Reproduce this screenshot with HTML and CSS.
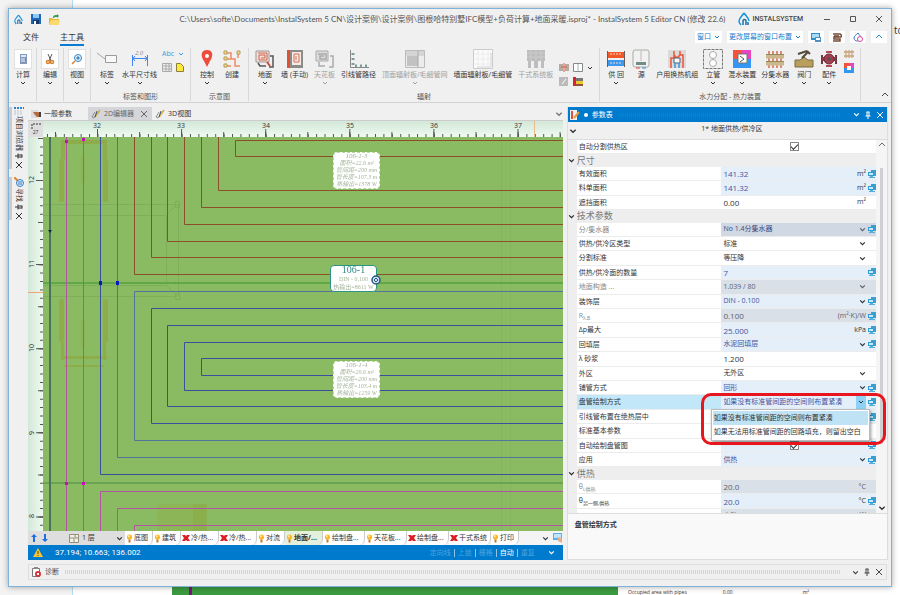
FILE: index.html
```
<!doctype html>
<html>

<head>
    <meta charset="utf-8">
    <title>InstalSystem 5 Editor CN</title>
    <link rel="stylesheet" href="styles.css">
</head>

<body>
    <!-- Shared icons -->
    <svg class="defs" aria-hidden="true">
        <symbol id="chev" viewBox="0 0 6 6"><path d="M1 2l2 2 2-2" fill="none" stroke="currentColor" /></symbol>
        <symbol id="pc" viewBox="0 0 8 8"><path d="M3 0h5v6H5V5H3z" fill="#3c9fd0" /><path d="M0 2h6v4H0z" fill="#2e9bd6" /><path d="M1 3h4v2H1z" fill="#c9ecfb" /><path d="M2 6h3v1h2v1H1V7h1z" fill="#58aed8" /></symbol>
        <symbol id="bulb" viewBox="0 0 7 9"><circle cx="3.500" cy="3" r="2.600" fill="#fbb829" /><circle cx="2.800" cy="2.300" r="1" fill="#fff0a8" /><path d="M2.500 5.500h2v3h-2z" fill="#b77b35" /></symbol>
        <symbol id="cross" viewBox="0 0 8 8"><path d="M0 1h3l1 1 1-1h3L6 4l2 3H5L4 6 3 7H0l2-3z" fill="#dc1f26" /></symbol>
        <symbol id="close" viewBox="0 0 8 8"><path d="M1 1l6 6M7 1L1 7" fill="none" stroke="currentColor" /></symbol>
        <symbol id="pin" viewBox="0 0 8 8"><path d="M2.500 1h3M3 1v4M5 1v4M1.500 5h5M4 5v3" fill="none" stroke="currentColor" /></symbol>
        <symbol id="pen" viewBox="0 0 10 10"><path d="M1 8l3-5M3 9l3-4M1 8l2 1" stroke="#8b8f96" fill="none" /><path d="M4 8L9 1" stroke="#d9a93c" stroke-width="1.500" /><path d="M6 2l-2 6" stroke="#38567c" /></symbol>
        <symbol id="drop" viewBox="0 0 12 14"><path d="M6 1C4 4 1 6 1 9c0 2 1 3 2 4M6 1c2 3 5 5 5 8" fill="none" stroke="#1492dc" stroke-width="1.500" /><path d="M5 13V9c0-2 3-2 3 0v4M10 10v3" fill="none" stroke="#1a6fae" stroke-width="1.500" /></symbol>
    </svg>

    <div class="backdrop">
        <div class="backdrop-text">to</div>
        <div class="backdrop-bottom">
            <div class="backdrop-plan"></div>
            <div class="backdrop-row"><span>Occupied area with pipes</span><span>0.00</span><span>m²</span></div>
        </div>
    </div>

    <div class="window">
        <header class="titlebar">
            <div class="quick">
                <svg width="9" height="11"><use href="#drop" /></svg>
                <svg width="10" height="10" viewBox="0 0 10 10"><path d="M0 0h10v10H0z" fill="#1e66b8" /><path d="M2 0h6v4H2z" fill="#8ec9f2" /><path d="M2 6h6v4H2z" fill="#173a66" /><path d="M3 7h2v3H3z" fill="#fff" /></svg>
                <svg width="11" height="11" viewBox="0 0 11 11"><path d="M0 4h3l1 1h6v6H0z" fill="#e5b93b" /><path d="M2 6h9l-1 5H0z" fill="#f8da6e" /><path d="M4 4c0-3 2-3 4-3V0l2 2-2 2V3C6 3 5 3 5 4z" fill="#2fa24a" /></svg>
            </div>
            <div class="title">C:\Users\softe\Documents\InstalSystem 5 CN\设计案例\设计案例\图根哈特别墅IFC模型+负荷计算+地面采暖.isproj* - InstalSystem 5 Editor CN (修改 22.6)</div>
            <div class="winbar">
                <div class="brand"><svg width="12" height="14"><use href="#drop" /></svg>INSTALSYSTEM</div>
                <button aria-label="最小化"><svg width="8" height="8" viewBox="0 0 8 8"><path d="M1 4.500h6" stroke="#555" /></svg></button>
                <button aria-label="最大化"><svg width="8" height="8" viewBox="0 0 8 8"><path d="M1.500 1.500h5v5h-5z" fill="none" stroke="#555" /></svg></button>
                <button aria-label="关闭"><svg width="8" height="8"><use href="#close" /></svg></button>
            </div>
        </header>

        <nav class="menu">
            <button class="menu-tab">文件</button>
            <button class="menu-tab current">主工具</button>
            <div class="menu-right">
                <button class="chip">窗口 <svg width="6" height="6"><use href="#chev" /></svg></button>
                <button class="chip">更改屏幕的窗口布置 <svg width="6" height="6"><use href="#chev" /></svg></button>
                <button class="chip" aria-label="屏幕"><svg width="10" height="10" viewBox="0 0 10 10"><path d="M0 1h9v7H0z" fill="#2e8fd0" /><path d="M1 2h7v4H1z" fill="#a8dcf7" /><path d="M4 5h6v5H4z" fill="#5390c0" /><path d="M5 6h4v2H5z" fill="#fff" /></svg></button>
                <button class="chip" aria-label="材料"><svg width="10" height="10" viewBox="0 0 10 10"><path d="M1 2h7c2 1 2 3 0 3H2v2h6v2H1M2 4h5" fill="none" stroke="#754c35" stroke-width="1.500" /></svg></button>
                <button class="chip" aria-label="水热"><svg width="10" height="10" viewBox="0 0 10 10"><path d="M5 1C3 3 1 4 1 6c0 4 7 4 7 0C8 4 6 3 5 1z" fill="none" stroke="#3275c8" /><circle cx="7" cy="7" r="2.500" fill="#fff" stroke="#e044a0" /></svg></button>
                <button class="chip" aria-label="折叠"><svg width="8" height="8" viewBox="0 0 8 8"><path d="M1 5l3-3 3 3" fill="none" stroke="#258bd2" /></svg></button>
            </div>
        </nav>

        <div class="ribbon">
            <section class="group single">
                <button class="tool boxed"><span class="box"><svg width="12" height="12" viewBox="0 0 12 12"><path d="M3 1h7v10H3z" fill="#8698b9" /><path d="M4 2h5v2H4z" fill="#dfe9f7" /><path d="M4 6h4M4 8h4" stroke="#eef" /><path d="M8 6h1v1H8z" fill="#b43c56" /></svg></span>计算<svg width="6" height="6"><use href="#chev" /></svg></button>
            </section>
            <section class="group single">
                <button class="tool boxed"><span class="box"><svg width="12" height="12" viewBox="0 0 12 12"><path d="M4 1l3 7M8 1L5 8" stroke="#565b64" fill="none" /><circle cx="4" cy="9" r="1.500" fill="none" stroke="#d9822b" stroke-width="1.500" /><circle cx="8" cy="9" r="1.500" fill="none" stroke="#d9822b" stroke-width="1.500" /></svg></span>编辑<svg width="6" height="6"><use href="#chev" /></svg></button>
            </section>
            <section class="group single">
                <button class="tool boxed"><span class="box"><svg width="12" height="12" viewBox="0 0 12 12"><circle cx="7" cy="5" r="3.500" fill="#e2f2fd" stroke="#3e84c6" /><path d="M5 5l2-2 2 2-2 2z" fill="#3e84c6" /><path d="M4 8l-3 3" stroke="#d9822b" stroke-width="1.500" /></svg></span>视图<svg width="6" height="6"><use href="#chev" /></svg></button>
            </section>

            <section class="group">
                <div class="tools">
                    <button class="tool"><svg width="20" height="20" viewBox="0 0 20 20"><path d="M0 4l8 6" stroke="#a5a5a5" /><path d="M8.500 6.500h11v7h-11z" fill="#f8f8f8" stroke="#9a9a9a" /></svg>标签<svg width="6" height="6"><use href="#chev" /></svg></button>
                    <button class="tool"><svg width="20" height="20" viewBox="0 0 20 20"><text x="5" y="6" class="dim-text">2.0</text><path d="M2.500 6v11M17.500 6v11M3 9.500h14M5 7L3 9.500 5 12M15 7l2 2.500-2 2.500" fill="none" stroke="#3d83f2" /></svg>水平尺寸线<svg width="6" height="6"><use href="#chev" /></svg></button>
                    <div class="minis">
                        <button class="abc">Abc <svg width="6" height="6"><use href="#chev" /></svg></button>
                        <div>
                            <button aria-label="表格"><svg width="10" height="9" viewBox="0 0 10 9"><path d="M.5.5h9v8h-9zM1 3h8M1 6h8M4 1v7M7 1v7" fill="#eee" stroke="#aaa" /></svg></button>
                            <button aria-label="便签"><svg width="8" height="9" viewBox="0 0 8 9"><path d="M.5.5h4l3 3v5h-7z" fill="#ffe83d" stroke="#89813a" /></svg></button>
                        </div>
                    </div>
                </div>
                <div class="caption">标签和图形</div>
            </section>

            <section class="group">
                <div class="tools">
                    <button class="tool"><svg width="20" height="20" viewBox="0 0 20 20"><path d="M10 1c-7 0-6 7-3 11l3 6 3-6c3-4 4-11-3-11z" fill="#ef4b3c" /><circle cx="10" cy="7" r="2" fill="#fff" /></svg>控制<svg width="6" height="6"><use href="#chev" /></svg></button>
                    <button class="tool"><svg width="20" height="20" viewBox="0 0 20 20"><path d="M5 4h4v6h4v7h5M5 10h4M5 17h4M16 4v5" fill="none" stroke="#ee8b61" stroke-width="1.500" /><path d="M2 2h3v3H2zM2 8h3v3H2zM2 15h3v3H2zM15 2h3v3h-3z" fill="#f3e0a0" stroke="#b39b50" /></svg>创建</button>
                </div>
                <div class="caption">示意图</div>
            </section>

            <section class="group">
                <div class="tools roomy">
                    <button class="tool"><svg width="20" height="20" viewBox="0 0 20 20"><path d="M1 2h13v11H1z" fill="#f9ded5" stroke="#999" /><path d="M3 4h9v7H4V6h6v3H6" fill="none" stroke="#c76755" /><path d="M3 14l2 3h6M15 7h3v11h-4" fill="none" stroke="#555" stroke-width="1.500" /><path d="M12 13l3 4" stroke="#d14832" stroke-width="2" /></svg>地面<svg width="6" height="6"><use href="#chev" /></svg></button>
                    <button class="tool"><svg width="20" height="20" viewBox="0 0 20 20"><path d="M2 1h16v18H2z" fill="#8b8b88" /><path d="M2 1h3v18H2z" fill="#e25032" /><path d="M7 3h9v13H7z" fill="#f4ebe7" /><path d="M9 5h5v8H9zM11 7v4" fill="none" stroke="#db6b58" /></svg>墙 (手动)</button>
                    <button class="tool off"><svg width="20" height="20" viewBox="0 0 20 20"><path d="M1 2h12v10H1z" fill="#ddd" stroke="#aaa" /><path d="M3 5h8v5H5V7h4M15 7h3v11h-4M4 13v4h6" fill="none" stroke="#aaa" stroke-width="1.500" /></svg>天花板<svg width="6" height="6"><use href="#chev" /></svg></button>
                    <button class="tool"><svg width="20" height="20" viewBox="0 0 20 20"><path d="M1.500 1v17.500H20" fill="none" stroke="#888" /><path d="M4 4v13h14" fill="none" stroke="#7f9a9b" stroke-width="3" stroke-dasharray="2 3" /></svg>引线管路径</button>
                    <button class="tool off"><svg width="20" height="20" viewBox="0 0 20 20"><path d="M.5 1.500h19v17H.5z" fill="#ececec" stroke="#bbb" /><path d="M1 2h18v5H1z" fill="#d5d5d5" /><path d="M2 7h11v10H2z" fill="#c2c2c2" /><path d="M13 2v16" stroke="#aaa" /></svg>顶面辐射板/毛细管网<svg width="6" height="6"><use href="#chev" /></svg></button>
                    <button class="tool"><svg width="20" height="20" viewBox="0 0 20 20"><path d="M.5.5h19v19H.5z" fill="#fafafa" stroke="#ccc" /><path d="M5 1v18M10 1v18M15 1v18M1 5h18M1 10h18M1 15h18" stroke="#ececec" /><path d="M18 4v14H4" fill="none" stroke="#d6d6d6" /></svg>墙面辐射板/毛细管</button>
                    <button class="tool off"><svg width="20" height="20" viewBox="0 0 20 20"><path d="M1 1h18v11H1zM2 12h3v7H2zM8 12h4v7H8zM15 12h3v7h-3z" fill="#bdbdbd" /><path d="M1 4h18M1 8h18M5 1v11M10 1v11M15 1v11" stroke="#ccc" /></svg>干式系统板</button>
                    <div class="minis low">
                        <div>
                            <button aria-label="镜像"><svg width="10" height="9" viewBox="0 0 10 9"><path d="M0 1h4v7H0zM6 1h4v7H6z" fill="#b7aaa3" /><path d="M5 0v9M2 4h6" stroke="#e05c43" /></svg></button>
                            <button aria-label="分割"><svg width="10" height="9" viewBox="0 0 10 9"><path d="M.5.5h9v8h-9z" fill="#fff" stroke="#888" /><path d="M5 1v7" stroke="#9bb" /></svg></button>
                            <svg width="6" height="6"><use href="#chev" /></svg>
                        </div>
                        <div>
                            <button aria-label="修改"><svg width="10" height="9" viewBox="0 0 10 9"><path d="M0 0h9v9H0z" fill="#bbb" /><path d="M3 7l4-5" stroke="#fff" /></svg></button>
                            <button aria-label="图层"><svg width="10" height="9" viewBox="0 0 10 9"><path d="M2 1h8v3H2z" fill="#777" /><path d="M2 4h8v3H2z" fill="#ecc934" /><path d="M2 7h8v2H2z" fill="#8d5535" /><path d="M0 0h3v9H0z" fill="#d5242d" /></svg></button>
                        </div>
                    </div>
                </div>
                <div class="caption">辐射</div>
            </section>

            <section class="group">
                <div class="tools">
                    <button class="tool"><svg width="20" height="20" viewBox="0 0 20 20"><path d="M1 3h18v6H1z" fill="#f05626" /><path d="M1 11h18v6H1z" fill="#3d98f0" /><path d="M1.500 2v8M18.500 2v8M1.500 10v8M18.500 10v8" stroke="#675e5a" /><path d="M4 5h11M4 14h11" stroke="#fbd9cc" stroke-dasharray="2 1" /></svg>供 回<svg width="6" height="6"><use href="#chev" /></svg></button>
                    <button class="tool"><svg width="20" height="20" viewBox="0 0 20 20"><rect x="2" y="1" width="16" height="17" rx="2" fill="#f1f1ef" stroke="#aaa" /><path d="M10 2v10" stroke="#bbb" /><path d="M5 13h10v3H5z" fill="#718b89" /><path d="M5 19h4" stroke="#d44" /><path d="M11 19h4" stroke="#38c" /></svg>源</button>
                    <button class="tool"><svg width="20" height="20" viewBox="0 0 20 20"><path d="M1 1h18v18H1z" fill="#dadada" /><path d="M4 19V9h3V2M16 19V6h-3V2M7 6l3 3 3-3" fill="none" stroke="#ef5335" stroke-width="1.500" /><path d="M7 9h6v5H7z" fill="#fff" stroke="#495c70" /><path d="M8 14v5M12 14v5" stroke="#3996dc" stroke-width="1.500" /></svg>户用换热机组</button>
                    <button class="tool"><svg width="20" height="20" viewBox="0 0 20 20"><path d="M.5.500h19v19H.5z" fill="none" stroke="#777" stroke-dasharray="3 1" /><circle cx="10" cy="6" r="3.500" fill="#fff" stroke="#aaa" /><circle cx="10" cy="14" r="3.500" fill="#fff" stroke="#aaa" /></svg>立管<svg width="6" height="6"><use href="#chev" /></svg></button>
                    <button class="tool"><svg width="20" height="20" viewBox="0 0 20 20"><path d="M1 1h9v9H1z" fill="#f3523b" /><path d="M10 1h9v9h-9z" fill="#e846c0" /><path d="M1 10h18v9H1z" fill="#3296f2" /><path d="M6 5h9v9H6z" fill="#fff" stroke="#767676" /><path d="M8 7l4 3-4 3" fill="none" stroke="#555" /></svg>混水装置<svg width="6" height="6"><use href="#chev" /></svg></button>
                    <button class="tool"><svg width="20" height="20" viewBox="0 0 20 20"><path d="M4 2v17M8 2v17M12 2v17M16 2v17" stroke="#dc8b7a" stroke-width="2" /><path d="M1 7.500h18M1 14.500h18" stroke="#cbb98b" stroke-width="4" /><path d="M1 5.500h18M1 12.500h18" stroke="#968759" /></svg>分集水器<svg width="6" height="6"><use href="#chev" /></svg></button>
                    <button class="tool"><svg width="20" height="20" viewBox="0 0 20 20"><path d="M1 11h5l4-3 4 3h5v7H1z" fill="#b99f5e" stroke="#7d6b3e" /><path d="M8 9l6-6M4 5l9-3M13 2l3 3" stroke="#554b3a" stroke-width="2" /></svg>阀门<svg width="6" height="6"><use href="#chev" /></svg></button>
                    <button class="tool"><svg width="20" height="20" viewBox="0 0 20 20"><path d="M3 6v9M17 6v9" stroke="#6b3a44" stroke-width="2" /><path d="M3 10h14" stroke="#8d3b48" stroke-width="4" /><circle cx="10" cy="10" r="5" fill="#a83f4d" stroke="#662b37" /><circle cx="10" cy="10" r="2" fill="#5b4f56" /><path d="M7 3h6M7 17h6" stroke="#b54756" stroke-width="2" /></svg>配件<svg width="6" height="6"><use href="#chev" /></svg></button>
                    <div class="minis stack">
                        <button aria-label="集水器"><svg width="10" height="10" viewBox="0 0 10 10"><path d="M2 1v8M5 1v8M8 1v8" stroke="#db7a6a" /><path d="M0 3h10M0 7h10" stroke="#c4b384" stroke-width="2" /></svg></button>
                        <button aria-label="混水"><svg width="10" height="10" viewBox="0 0 10 10"><path d="M0 0h5v5H0z" fill="#f3523b" /><path d="M5 0h5v5H5z" fill="#e846c0" /><path d="M0 5h10v5H0z" fill="#3296f2" /><path d="M3 3h4v4H3z" fill="#fff" /></svg></button>
                    </div>
                </div>
                <div class="caption">水力分配 - 热力装置</div>
            </section>
            <button class="ribbon-fold" aria-label="折叠功能区"><svg width="8" height="8" viewBox="0 0 8 8"><path d="M1 5l3-3 3 3" fill="none" stroke="#444" /></svg></button>
        </div>

        <div class="work">
            <aside class="dock">
                <button class="dock-tab"><svg width="10" height="8" viewBox="0 0 10 8"><path d="M0 1h10" stroke="#2f7fd6" stroke-width="2" stroke-dasharray="2 1" /><path d="M1 3v5M4 3v5M7 3v5" stroke="#b5c2d0" /></svg>项目浏览器<svg class="turned" width="8" height="8"><use href="#pin" /></svg><svg width="8" height="8"><use href="#close" /></svg></button>
                <button class="dock-tab"><svg width="10" height="10" viewBox="0 0 10 10"><path d="M0 0l4 4" stroke="#e2872c" stroke-width="2" /><circle cx="6" cy="6" r="3.500" fill="#d9ecfb" stroke="#3a7fc2" /><path d="M5 4v4M7 4v4" stroke="#3a7fc2" /></svg>寻找<svg class="turned" width="8" height="8"><use href="#pin" /></svg><svg width="8" height="8"><use href="#close" /></svg></button>
            </aside>

            <main class="editor">
                <div class="tabs">
                    <button class="tab"><svg width="10" height="10" viewBox="0 0 10 10"><path d="M0 1h7v8H0z" fill="#dcdcdc" /><path d="M2 3h5l3 1v4H6L4 6z" fill="#b56a3c" /><path d="M8 3h2v5H8z" fill="#3a3f49" /></svg>一般参数</button>
                    <button class="tab current"><svg width="10" height="10"><use href="#pen" /></svg>2D编辑器<svg class="tab-close" width="8" height="8"><use href="#close" /></svg></button>
                    <button class="tab"><svg width="10" height="10"><use href="#pen" /></svg>3D视图</button>
                    <button class="tabs-more" aria-label="更多标签"><svg width="8" height="8"><use href="#chev" /></svg></button>
                </div>

                <div class="sheet">
                    <div class="corner"><svg width="10" height="6" viewBox="0 0 10 6"><path d="M1 6V1h9" fill="none" stroke="#333" stroke-dasharray="2 1" /></svg>27</div>
                    <svg class="ruler-top" width="100%" height="16">
                        <path d="M4 14.500h3000" stroke="#555" stroke-width="3" stroke-dasharray="1 7.410" />
                        <path d="M12 13.500h3000" stroke="#555" stroke-width="5" stroke-dasharray="1 41.050" />
                        <path d="M54 12h3000" stroke="#555" stroke-width="8" stroke-dasharray="1 83.100" />
                        <g class="scale">
                            <text x="54" y="7">32</text>
                            <text x="138" y="7">33</text>
                            <text x="223" y="7">34</text>
                            <text x="307" y="7">35</text>
                            <text x="391" y="7">36</text>
                            <text x="475" y="7">37</text>
                        </g>
                        <path d="M491.500 0v16" stroke="#efb98c" />
                    </svg>
                    <svg class="ruler-left" width="15" height="100%">
                        <path d="M13.500 1v2000" stroke="#555" stroke-width="3" stroke-dasharray="1 7.410" />
                        <path d="M12.500 1v2000" stroke="#555" stroke-width="5" stroke-dasharray="1 41.050" />
                        <path d="M11.500 43v2000" stroke="#555" stroke-width="7" stroke-dasharray="1 83.100" />
                        <g class="scale">
                            <text transform="translate(6 43) rotate(-90)">12</text>
                            <text transform="translate(6 127) rotate(-90)">11</text>
                            <text transform="translate(6 211) rotate(-90)">10</text>
                            <text transform="translate(6 296) rotate(-90)">9</text>
                            <text transform="translate(6 379) rotate(-90)">8</text>
                        </g>
                        <path d="M0 155.500h15" stroke="#efa56c" />
                    </svg>
                    <div class="canvas">
                        <svg class="drawing" width="100%" height="100%">
                            <!-- furniture underlay -->
                            <g class="furniture">
                                <rect x="16" y="22" width="5" height="43" rx="2" />
                                <rect x="60" y="22" width="5" height="43" rx="2" />
                                <path d="M18 3h46v4H18zM18 7h4v15h-4zM60 7h4v15h-4z" />
                                <rect x="16" y="162" width="5" height="43" rx="2" />
                                <rect x="60" y="162" width="5" height="43" rx="2" />
                                <path d="M18 219h46v3H18zM18 205h3v18h-3zM60 205h3v18h-3zM21 228h40v2H21z" />
                                <path d="M38 18h4v28h-4zM38 183h4v28h-4z" opacity=".5" />
                                <path d="M114 367h49v28h-49z" opacity=".4" />
                                <path d="M150 367h14v28h-14z" opacity=".7" />
                            </g>
                            <path d="M0 67.500h134M0 78.500h123M0 148.500h123M0 159.500h134M123.500 79v69M135.500 67v92M123 78l11-11M123 148l11 11" class="wall" />
                            <path d="M132.500 64.500h4v6h-4zM132.500 156.500h4v6h-4z" class="wall" />
                            <path d="M178.500 0v395M187.500 0v395" class="wall faint" transform="translate(280)" />
                            <path d="M0 146h3000" stroke="#5fa747" stroke-width="2" />
                            <path d="M0 346h3000" stroke="#6aa351" stroke-width="2" />
                            <g class="supply">
                                <path d="M91.500 0v137.500H3000" />
                                <path d="M108.500 0v120.500H3000" />
                                <path d="M124.500 0v104.500H3000" />
                                <path d="M141.500 0v87.500H3000" />
                                <path d="M158.500 0v70.500H3000" />
                                <path d="M175.500 0v53.500H3000" />
                                <path d="M3000 3.500H192.500v16H3000" />
                            </g>
                            <g class="return">
                                <path d="M57.500 0v337.500H3000" />
                                <path d="M74.500 0v320.500H3000" class="light" />
                                <path d="M3000 154.500H91.500v149H3000" class="light" />
                                <path d="M3000 171.500H108.500v115H3000" />
                                <path d="M3000 188.500H124.500v81H3000" />
                                <path d="M3000 205.500H141.500v48H3000" />
                                <path d="M3000 221.500H158.500v17H3000" />
                            </g>
                            <path d="M7 0v395" stroke="#48745f" stroke-width="2" />
                            <path d="M5 93h4l-2 3z" fill="#14284f" />
                            <g class="mains">
                                <path d="M23.500 0v395M40.500 0v395M3000 354.500H57.500V396M3000 371.500H74.500V396M3000 388.500H91.500V396" />
                            </g>
                            <path d="M22 3h3v3h-3zM39 1h3v3h-3zM22 345h3v3h-3zM39 345h3v3h-3z" fill="#c410b4" />
                            <path d="M56 144h3v4h-3zM73 144h3v4h-3z" fill="#0b16c4" />
                        </svg>
                        <div class="tag zone-a"><b>106-1-3</b><br>面积=22.6 m²<br>管间距=200 mm<br>管长度=107.3 m<br>热输出=1378 W</div>
                        <div class="tag room"><b>106-1</b><br>DIN - 0.100<br>热输出=8611 W
                            <svg class="room-mark" width="10" height="10" viewBox="0 0 10 10"><circle cx="5" cy="5" r="4" fill="#cfe2f2" stroke="#27567f" stroke-width="1.500" /><path d="M3 5l2-2 2 2-2 2z" fill="none" stroke="#27567f" /></svg>
                        </div>
                        <div class="tag zone-b"><b>106-1-4</b><br>面积=20.6 m²<br>管间距=200 mm<br>管长度=103.4 m<br>热输出=1259 W</div>
                    </div>
                </div>

                <div class="layers">
                    <button class="arrow" aria-label="上一层"><svg width="6" height="8" viewBox="0 0 6 8"><path d="M3 0l3 3H4v5H2V3H0z" fill="#1f6fe0" /></svg></button>
                    <button class="arrow" aria-label="下一层"><svg width="6" height="8" viewBox="0 0 6 8"><path d="M3 8l3-3H4V0H2v5H0z" fill="#1f6fe0" /></svg></button>
                    <div class="storey">
                        <svg width="10" height="9" viewBox="0 0 10 9"><path d="M.5.500h9v8h-9zM1 4h4v4M6 1v3h3" fill="#f5f0e6" stroke="#958e7d" /></svg>
                        <select aria-label="楼层"><option>1 层</option></select>
                        <svg width="7" height="7"><use href="#chev" /></svg>
                    </div>
                    <button class="layer"><svg width="7" height="9"><use href="#bulb" /></svg>底图</button>
                    <button class="layer"><svg width="7" height="9"><use href="#bulb" /></svg>建筑</button>
                    <button class="layer mid"><svg width="8" height="8"><use href="#cross" /></svg>冷/热...</button>
                    <button class="layer mid"><svg width="8" height="8"><use href="#cross" /></svg>冷/热...</button>
                    <button class="layer"><svg width="7" height="9"><use href="#bulb" /></svg>对流</button>
                    <button class="layer mid active"><svg width="7" height="9"><use href="#bulb" /></svg>地面/...</button>
                    <button class="layer wide"><svg width="7" height="9"><use href="#bulb" /></svg>绘制盘...</button>
                    <button class="layer wide"><svg width="7" height="9"><use href="#bulb" /></svg>天花板...</button>
                    <button class="layer wide"><svg width="8" height="8"><use href="#cross" /></svg>绘制盘...</button>
                    <button class="layer wide"><svg width="8" height="8"><use href="#cross" /></svg>干式系统</button>
                    <button class="layer"><svg width="7" height="9"><use href="#bulb" /></svg>打印</button>
                    <div class="layers-end">
                        <svg width="7" height="7"><use href="#chev" /></svg>
                        <svg width="10" height="10" viewBox="0 0 10 10"><path d="M0 0h9v7H0z" fill="#58aee3" /><path d="M1 1h7v4H1z" fill="#bfe6fb" /><path d="M4 4l5 1v5L5 8z" fill="#e2b08e" /></svg>
                    </div>
                </div>

                <div class="status">
                    <svg width="10" height="9" viewBox="0 0 10 9"><path d="M5 0l5 9H0z" fill="#f8c53a" /><path d="M5 3v3M5 7v1" stroke="#5a4410" /></svg>
                    <span class="coords">37.194; 10.663; 136.002</span>
                    <div class="modes">
                        <button>定向线</button><button>上锁</button><button>栅格</button><button class="on">自动</button><button>重复</button>
                    </div>
                    <svg width="7" height="7"><use href="#chev" /></svg>
                </div>
            </main>

            <aside class="panel">
                <header class="panel-head">
                    <svg width="10" height="10" viewBox="0 0 10 10"><path d="M0 0h7v10H0z" fill="#f4f1ee" /><path d="M1 1h2v8H1z" fill="#d8534b" /><path d="M4 8l5-6" stroke="#e99c3a" stroke-width="2" /></svg>
                    <span class="dot"></span>
                    <h2>参数表</h2>
                    <span class="grip"></span>
                    <button aria-label="菜单"><svg width="7" height="7"><use href="#chev" /></svg></button>
                    <button aria-label="固定"><svg width="8" height="8"><use href="#pin" /></svg></button>
                    <button aria-label="关闭"><svg width="8" height="8"><use href="#close" /></svg></button>
                </header>
                <div class="panel-sub"><svg width="8" height="8"><use href="#chev" /></svg><span>1* 地面供热/供冷区</span></div>

                <div class="props">
                    <form class="prop-list">
                        <div class="prop"><label for="p1">自动分割供热区</label><div class="value"><input type="checkbox" id="p1" checked></div></div>
                        <h3><svg width="7" height="7"><use href="#chev" /></svg>尺寸</h3>
                        <div class="prop"><label for="p2">有效面积</label><div class="value set"><input id="p2" value="141.32"><span>m²</span><svg width="8" height="8"><use href="#pc" /></svg></div></div>
                        <div class="prop"><label for="p3">料单面积</label><div class="value set"><input id="p3" value="141.32"><span>m²</span><svg width="8" height="8"><use href="#pc" /></svg></div></div>
                        <div class="prop"><label for="p4">遮挡面积</label><div class="value"><input id="p4" value="0.00"><span>m²</span><i></i></div></div>
                        <h3><svg width="7" height="7"><use href="#chev" /></svg>技术参数</h3>
                        <div class="prop muted"><label for="p5">分/集水器</label><div class="value locked strong"><select id="p5"><option>No 1.4分集水器</option></select><svg width="7" height="7"><use href="#chev" /></svg><svg width="8" height="8"><use href="#pc" /></svg></div></div>
                        <div class="prop"><label for="p6">供热/供冷区类型</label><div class="value"><select id="p6"><option>标准</option></select><svg width="7" height="7"><use href="#chev" /></svg><i></i></div></div>
                        <div class="prop"><label for="p7">分割标准</label><div class="value"><select id="p7"><option>等压降</option></select><svg width="7" height="7"><use href="#chev" /></svg><i></i></div></div>
                        <div class="prop"><label for="p8">供热/供冷面的数量</label><div class="value set"><input id="p8" value="7"><svg width="8" height="8"><use href="#pc" /></svg></div></div>
                        <div class="prop muted"><label for="p9">地面构造 ...</label><div class="value locked"><select id="p9"><option>1.039 / 80</option></select><svg width="7" height="7"><use href="#chev" /></svg><i></i></div></div>
                        <div class="prop"><label for="p10">装饰层</label><div class="value set"><select id="p10"><option>DIN - 0.100</option></select><svg width="7" height="7"><use href="#chev" /></svg><svg width="8" height="8"><use href="#pc" /></svg></div></div>
                        <div class="prop muted"><label for="p11">R<sub>λ,B</sub></label><div class="value locked"><input id="p11" value="0.100"><span>(m²·K)/W</span><svg width="8" height="8"><use href="#pc" /></svg></div></div>
                        <div class="prop"><label for="p12">Δp最大</label><div class="value set"><input id="p12" value="25.000"><span>kPa</span><svg width="8" height="8"><use href="#pc" /></svg></div></div>
                        <div class="prop"><label for="p13">回填层</label><div class="value set"><select id="p13"><option>水泥回填层</option></select><svg width="7" height="7"><use href="#chev" /></svg><svg width="8" height="8"><use href="#pc" /></svg></div></div>
                        <div class="prop"><label for="p14">λ 砂浆</label><div class="value"><input id="p14" value="1.200"></div></div>
                        <div class="prop"><label for="p15">外区</label><div class="value"><select id="p15"><option>无外区</option></select><svg width="7" height="7"><use href="#chev" /></svg><i></i></div></div>
                        <div class="prop"><label for="p16">铺管方式</label><div class="value set"><select id="p16"><option>回形</option></select><svg width="7" height="7"><use href="#chev" /></svg><svg width="8" height="8"><use href="#pc" /></svg></div></div>
                        <div class="prop selected"><label for="p17">盘管绘制方式</label><div class="value set"><select id="p17"><option>如果没有标准管间距的空间则布置紧凑</option></select><svg class="open" width="10" height="13" viewBox="0 0 10 13"><path d="M3 5l2 2 2-2" fill="none" stroke="#333" /></svg><svg width="8" height="8"><use href="#pc" /></svg></div>
                            <ul class="options">
                                <li class="hover">如果没有标准管间距的空间则布置紧凑</li>
                                <li>如果无法用标准管间距的回路填充，则留出空白</li>
                            </ul>
                            <div class="callout"></div>
                        </div>
                        <div class="prop"><label for="p18">引线管布置在绝热层中</label><div class="value set"><input id="p18"><svg width="8" height="8"><use href="#pc" /></svg></div></div>
                        <div class="prop"><label for="p19">标准基本参数</label><div class="value"><input id="p19"></div></div>
                        <div class="prop"><label for="p20">自动绘制盘管图</label><div class="value set"><input type="checkbox" id="p20" checked><svg width="8" height="8"><use href="#pc" /></svg></div></div>
                        <div class="prop"><label for="p21">应用</label><div class="value set"><select id="p21"><option>供热</option></select><svg width="7" height="7"><use href="#chev" /></svg><svg width="8" height="8"><use href="#pc" /></svg></div></div>
                        <h3><svg width="7" height="7"><use href="#chev" /></svg>供热</h3>
                        <div class="prop muted"><label for="p22">θ<sub>i,供热</sub></label><div class="value locked"><input id="p22" value="20.0"><span>°C</span><i></i></div></div>
                        <div class="prop"><label for="p23">θ<sub>另一侧,供热</sub></label><div class="value set"><input id="p23" value="20.0"><span>°C</span><svg width="8" height="8"><use href="#pc" /></svg></div></div>
                        <div class="prop muted"><label for="p24">Φ</label><div class="value locked"><input id="p24" class="cjk" value="自动"><span>W</span><i></i></div></div>
                    </form>
                    <div class="scrollbar"><svg width="8" height="8" viewBox="0 0 8 8"><path d="M1 5l3-3 3 3" fill="none" stroke="#666" /></svg><span class="thumb"></span><svg width="8" height="8"><use href="#chev" /></svg></div>
                </div>
                <div class="hint">盘管绘制方式</div>
            </aside>
        </div>

        <footer class="diagnostics">
            <svg width="9" height="10" viewBox="0 0 9 10"><path d="M.5 1.500h7v8h-7z" fill="#fff" stroke="#777" /><path d="M2 0h4v2H2z" fill="#888" /><circle cx="6" cy="7" r="3" fill="#d3333a" /><path d="M5 6l2 2M7 6L5 8" stroke="#fff" /></svg>
            诊断
            <span class="grip"></span>
            <button aria-label="菜单"><svg width="7" height="7"><use href="#chev" /></svg></button>
            <button aria-label="固定"><svg width="8" height="8"><use href="#pin" /></svg></button>
            <button aria-label="关闭"><svg width="8" height="8"><use href="#close" /></svg></button>
        </footer>
    </div>
</body>

</html>
```
FILE: styles.css
```
* {
    box-sizing: border-box;
}

body {
    margin: 0;
    padding: 8px;
    height: 100vh;
    overflow: hidden;
    background: #fff;
    color: #333;
    font-family: "Open Sans", "Noto Sans CJK SC", sans-serif;
    font-size: 7px;
    line-height: 10px;
}

button,
input,
select {
    margin: 0;
    padding: 0;
    border: 0;
    background: none;
    color: inherit;
    font: inherit;
}

select {
    appearance: none;
}

svg {
    display: block;
    flex: none;
}

.defs {
    position: absolute;
    width: 0;
    height: 0;
}

/* What shows round the window */
.backdrop {
    position: absolute;
    inset: 0;
    display: flex;
    flex-direction: column;
    justify-content: space-between;
    background: linear-gradient(90deg, #f3f3f3 72px, #b5dcf3 72px, #b5dcf3 73px, #fff 73px);
}

.backdrop-text {
    padding-top: 24px;
    padding-left: calc(100% - 6px);
    overflow: hidden;
    font-size: 10px;
    line-height: 12px;
}

.backdrop-bottom {
    display: flex;
    height: 9px;
    padding-left: 172px;
}

.backdrop-plan {
    width: 446px;
    background: linear-gradient(90deg, transparent 17px, #80107f 17px, #80107f 20px, transparent 20px) #3c9b40;
}

.backdrop-row {
    display: flex;
    flex: 1;
    gap: 36px;
    padding-left: 10px;
    font-size: 5px;
    line-height: 12px;
}

.backdrop-row span:last-child {
    padding-left: 34px;
}

.window {
    position: relative;
    display: flex;
    flex-direction: column;
    height: 100%;
    border: 1px solid #7fb2d8;
    background: #f0f0f0;
    box-shadow: 0 0 6px rgba(0, 0, 0, 0.35);
}

.titlebar {
    display: grid;
    grid-template-columns: 1fr auto 1fr;
    align-items: center;
    height: 20px;
    padding-left: 5px;
    color: #555;
}

.quick {
    display: flex;
    gap: 8px;
}

.title {
    font-family: Lato, "Noto Sans CJK SC", sans-serif;
    font-size: 8px;
    white-space: nowrap;
}

.winbar {
    display: flex;
    justify-content: flex-end;
    gap: 18px;
    padding-right: 8px;
}

.brand {
    display: flex;
    align-items: center;
    gap: 2px;
    margin-right: 2px;
    color: #444;
    font-family: Roboto, sans-serif;
    font-size: 7px;
    font-weight: 500;
}

.menu {
    display: flex;
    align-items: stretch;
    height: 18px;
    padding-left: 8px;
    font-size: 8px;
}

.menu-tab {
    margin: 0 7px 1px 6px;
    border-bottom: 2px solid transparent;
}

.menu-tab + .menu-tab {
    margin-left: 14px;
}

.menu-tab.current {
    border-color: #0b7ad1;
}

.menu-right {
    display: flex;
    gap: 5px;
    margin-left: auto;
    padding: 2px 4px 4px;
}

.chip {
    display: flex;
    align-items: center;
    justify-content: center;
    gap: 3px;
    min-width: 16px;
    padding: 0 2px;
    background: #fff;
    color: #1b7cc9;
    font-size: 7px;
}

/* Ribbon */
.ribbon {
    display: flex;
    height: 56px;
    padding: 0 1px;
    border-bottom: 1px solid #d2d2d2;
}

.group {
    display: flex;
    flex-direction: column;
    justify-content: space-between;
    margin: 1px 0;
    padding: 1px 6px 0;
    border-right: 1px solid #d8d8d8;
}

.group.single {
    width: 27px;
    padding: 1px 4px 0 3px;
}

.tools {
    display: flex;
    align-items: flex-start;
    gap: 5px;
}

.tools.roomy {
    gap: 6px;
}

.tool {
    display: flex;
    flex-direction: column;
    align-items: center;
    min-width: 20px;
    white-space: nowrap;
}

.tool > svg:first-child,
.box {
    margin-bottom: 1px;
}

.tool.off {
    color: #a0a0a0;
}

.box {
    display: flex;
    align-items: center;
    justify-content: center;
    width: 18px;
    height: 20px;
    border: 1px solid #e0e0e0;
    background: #fff;
}

.dim-text {
    fill: #888;
    font-size: 6px;
    font-style: italic;
}

.minis {
    display: flex;
    flex-direction: column;
    gap: 4px;
}

.minis div {
    display: flex;
    align-items: center;
    gap: 4px;
}

.minis.low {
    gap: 5px;
    padding-top: 14px;
}

.abc {
    display: flex;
    align-items: center;
    gap: 4px;
    color: #3a9ae0;
}

.caption {
    color: #555;
    line-height: 9px;
    text-align: center;
}

.ribbon-fold {
    margin: 0 1px 0 auto;
    padding-top: 40px;
}

/* Work area */
.work {
    display: flex;
    flex: 1;
    min-height: 0;
    padding: 4px 3px 0 0;
}

.dock {
    display: flex;
    flex-direction: column;
    gap: 8px;
    width: 19px;
}

.dock-tab {
    display: flex;
    align-items: center;
    gap: 1px;
    padding: 0 2px 0 0;
    border-left: 3px solid #c9cbd0;
    writing-mode: vertical-rl;
    text-orientation: sideways;
}

.turned {
    transform: rotate(90deg);
}

.editor {
    display: flex;
    flex: 536;
    flex-direction: column;
    min-width: 0;
    margin-bottom: 4px;
}

.tabs {
    display: flex;
    height: 14px;
    border-bottom: 1px solid #ccc;
}

.tab {
    display: flex;
    align-items: center;
    gap: 3px;
    padding: 0 4px 0 3px;
}

.tab:first-child {
    margin-right: 12px;
}

.tab.current {
    background: #d5d6d9;
    color: #666;
}

.tab-close {
    margin-left: 3px;
}

.tabs-more {
    margin-left: auto;
    color: #777;
}

.sheet {
    display: grid;
    flex: 1;
    grid-template: 16px minmax(0, 1fr) / 15px minmax(0, 1fr);
    min-height: 0;
}

.corner {
    padding: 2px 3px;
    background: #dedede;
    font-size: 5px;
    line-height: 7px;
    text-align: center;
}

.ruler-top {
    background: linear-gradient(#d3e8d8, #eefaf0);
}

.ruler-left {
    background: linear-gradient(90deg, #d3e8d8, #eefaf0);
}

.scale text {
    fill: #333;
    font-size: 7px;
    text-anchor: middle;
}

.canvas {
    position: relative;
    overflow: hidden;
    background: #8aba62;
}

.drawing {
    position: absolute;
    inset: 0;
}

.furniture {
    fill: #8fa944;
    opacity: 0.8;
}

.wall {
    fill: none;
    stroke: #7fae5a;
}

.faint {
    opacity: 0.5;
}

.supply {
    fill: none;
    stroke: #8c4f2c;
}

.return {
    fill: none;
    stroke: #38519f;
}

.return .light {
    stroke: #50749a;
}

.mains {
    fill: none;
    stroke: #b055a4;
}

.tag {
    position: absolute;
    width: 47px;
    border: 1px dashed #b9d6a4;
    border-radius: 4px;
    background: #fff;
    color: #a3b39a;
    font: italic 6px/7px "Liberation Serif", "Noto Sans CJK SC", serif;
    text-align: center;
    white-space: nowrap;
}

.tag b {
    font-size: 7px;
    font-weight: 400;
}

.zone-a {
    left: 290px;
    top: 15px;
}

.zone-b {
    left: 290px;
    top: 224px;
}

.room {
    left: 287px;
    top: 128px;
    border: 1px solid #2c9484;
    font-style: normal;
    line-height: 8px;
}

.room b {
    color: #2c8b84;
    font-size: 10px;
}

.room-mark {
    position: absolute;
    right: -5px;
    top: 9px;
}

.layers {
    display: flex;
    height: 14px;
    background: #f4f4f4;
}

.arrow {
    display: flex;
    align-items: center;
    justify-content: center;
    width: 11px;
    background: #dedede;
}

.storey {
    display: flex;
    align-items: center;
    gap: 3px;
    width: 75px;
    padding: 0 2px 0 19px;
    background: #dedede;
}

.storey select {
    flex: 1;
    min-width: 0;
}

.layer {
    display: flex;
    align-items: center;
    gap: 1px;
    width: 28px;
    padding-left: 1px;
    border-right: 1px solid #ccc;
    border-radius: 0 0 6px 0;
    background: #fff;
    white-space: nowrap;
}

.layer.mid {
    width: 38px;
}

.layer.wide {
    width: 42px;
}

.layer.active {
    background: #e2f0dc;
    font-weight: 700;
}

.layers-end {
    display: flex;
    align-items: center;
    gap: 4px;
    margin-left: auto;
}

.status {
    display: flex;
    align-items: center;
    height: 15px;
    padding: 0 8px 0 5px;
    background: #007acc;
    color: #fff;
}

.coords {
    margin-left: 12px;
    font-family: Roboto, sans-serif;
    font-size: 8px;
}

.modes {
    display: flex;
    margin: 0 10px 0 auto;
}

.modes button {
    padding: 0 3px;
    color: #4da3de;
    line-height: 8px;
}

.modes button + button {
    border-left: 1px solid #8cc4ea;
}

.modes .on {
    color: #fff;
}

/* Property panel */
.panel {
    display: flex;
    flex: 320;
    flex-direction: column;
    min-width: 0;
    margin: 0 0 4px 4px;
    border: 1px solid #ddd;
    border-top: 0;
}

.panel-head {
    display: flex;
    align-items: center;
    gap: 4px;
    height: 15px;
    padding: 0 3px 0 2px;
    background: #007acc;
    color: #fff;
}

.dot {
    width: 4px;
    height: 4px;
    border-radius: 50%;
    background: #fff;
}

h2,
h3 {
    margin: 0;
    font-size: inherit;
    font-weight: 400;
}

.grip {
    flex: 1;
    height: 4px;
    margin: 0 8px 0 2px;
    background: repeating-linear-gradient(90deg, rgba(128, 128, 128, 0.25) 0 1px, transparent 1px 2px);
}

.panel-sub {
    display: flex;
    align-items: center;
    height: 18px;
    padding-left: 1px;
    border-bottom: 1px solid #ddd;
}

.panel-sub span {
    flex: 1;
    padding-bottom: 4px;
    text-align: center;
}

.props {
    display: flex;
    flex: 1;
    min-height: 0;
    overflow: hidden;
    background: #fff;
}

.prop-list {
    display: flex;
    flex: 1;
    flex-direction: column;
    min-width: 0;
    margin-bottom: -10px;
    border-left: 9px solid #eee;
}

.prop-list h3 {
    display: flex;
    flex: 13 0 0;
    align-items: center;
    gap: 2px;
    margin-left: -9px;
    background: #eee;
    color: #777;
    font-size: 9px;
    line-height: 12px;
}

.prop-list h3 svg {
    color: #222;
}

.prop {
    position: relative;
    display: grid;
    flex: 14 0 0;
    grid-template-columns: 145fr 155fr;
    border-bottom: 1px solid #ececec;
}

.prop label {
    padding-left: 2px;
    line-height: 13px;
    white-space: nowrap;
}

.prop.muted label {
    color: #888;
}

.prop.selected {
    z-index: 1;
    background: #c2e7f9;
}

sub {
    font-size: 5px;
    line-height: 0;
}

.value {
    display: flex;
    align-items: center;
    gap: 2px;
    min-width: 0;
    padding-left: 2px;
    background: #fff;
}

.value.set {
    background: #e4effa;
}

.value.set input,
.value.set select {
    color: #4653a0;
}

.value.locked {
    background: #d9e0e7;
    color: #5a6070;
}

.value.strong {
    background: #cfd8e3;
}

.value.strong select {
    color: #3b4780;
}

.value input,
.value select {
    flex: 1;
    min-width: 0;
    height: 12px;
}

.value input {
    font-size: 8px;
}

.value input.cjk {
    font-size: 7px;
}

.value i {
    width: 8px;
}

.value input[type="checkbox"] {
    flex: none;
    appearance: none;
    width: 9px;
    height: 9px;
    margin: 0 auto;
    border: 1px solid #888;
    background: #fff;
}

.value:has(input[type="checkbox"]:only-child) {
    padding-right: 10px;
}

input[type="checkbox"]:checked::before {
    content: "";
    display: block;
    width: 6px;
    height: 3px;
    border: solid #333;
    border-width: 0 0 1px 1px;
    transform: translateY(1px) rotate(-45deg);
}

.open {
    background: #8fd0f5;
}

.options {
    position: absolute;
    top: 14px;
    left: 134px;
    width: 159px;
    margin: 0;
    padding: 1px;
    border: 1px solid #bbb;
    background: #fff;
    box-shadow: 1px 2px 3px rgba(0, 0, 0, 0.4);
    list-style: none;
}

.options li {
    padding: 0 1px;
    line-height: 14px;
    white-space: nowrap;
}

.options .hover {
    background: #bfe3f5;
}

.callout {
    position: absolute;
    top: -2px;
    right: -10px;
    left: 124px;
    height: 52px;
    border: 3px solid #e8151d;
    border-radius: 10px;
    pointer-events: none;
}

.scrollbar {
    display: flex;
    flex-direction: column;
    align-items: center;
    justify-content: space-between;
    width: 11px;
    padding: 1px 0;
    background: #f5f5f5;
}

.thumb {
    flex: 1;
    width: 3px;
    margin: 19px 0 60px;
    background: #cfd0d4;
}

.hint {
    height: 46px;
    padding: 6px 7px;
    border-top: 1px solid #ddd;
    background: #f9f9f9;
    font-weight: 700;
}

.diagnostics {
    display: flex;
    align-items: center;
    gap: 4px;
    height: 16px;
    margin: 0 4px 6px 19px;
    padding: 0 3px;
    border: 1px solid #ddd;
    color: #444;
}
```
